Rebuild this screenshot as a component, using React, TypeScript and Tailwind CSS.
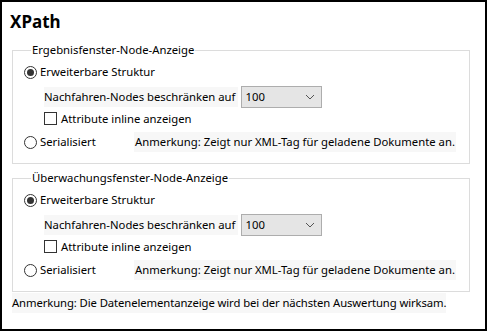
import React from "react";

function Radio({ checked }: { checked?: boolean }) {
  return (
    <span className="w-[13px] h-[13px] rounded-full border border-[#333] flex items-center justify-center shrink-0 bg-white">
      {checked && <span className="w-[7px] h-[7px] rounded-full bg-[#333]" />}
    </span>
  );
}

function Checkbox() {
  return <span className="w-[13px] h-[13px] border border-[#333] bg-white shrink-0" />;
}

function NodeGroup({ title }: { title: string }) {
  return (
    <fieldset className="border border-[#dcdcdc] pl-[11px] pr-2 pb-[7px]">
      <legend className="ml-[7px] px-[1px] leading-[16px]">{title}</legend>
      <div className="flex items-center gap-[3px] h-[24px] mt-[2px]">
        <Radio checked />
        <span>Erweiterbare Struktur</span>
      </div>
      <div className="flex items-center h-[24px] mt-[1px] pl-[20px]">
        <span className="bg-[#f7f7f7] pr-[3px] leading-[20px]">Nachfahren-Nodes beschränken auf</span>
        <div className="ml-[3px] w-[81px] h-[22px] bg-[#e5e5e5] border border-[#adadad] flex items-center justify-between pl-[3px] pr-[6px]">
          <span>100</span>
          <svg width="10" height="6" viewBox="0 0 10 6" fill="none" stroke="#555" strokeWidth="1">
            <path d="M1 1 L5 5 L9 1" />
          </svg>
        </div>
      </div>
      <div className="flex items-center gap-[4px] h-[19px] pl-[20px]">
        <Checkbox />
        <span>Attribute inline anzeigen</span>
      </div>
      <div className="flex items-center h-[28px]">
        <Radio />
        <span className="ml-[3px] w-[94px]">Serialisiert</span>
        <span className="bg-[#f7f7f7] px-[1px] leading-[20px]">Anmerkung: Zeigt nur XML-Tag für geladene Dokumente an.</span>
      </div>
    </fieldset>
  );
}

export default function App() {
  return (
    <div className="w-[489px] h-[332px] bg-white text-[11.3px] leading-[16px] text-black whitespace-nowrap" style={{ fontFamily: '"Noto Sans", sans-serif' }}>
      <div className="w-[487px] h-[331px] border-2 border-black pl-[10px] pr-[15px]">
        <h1 className="text-[17px] font-bold leading-[22px] pt-[9px] -ml-[2px]">XPath</h1>
        <div className="mt-[9px] flex flex-col gap-[6px]">
          <NodeGroup title="Ergebnisfenster-Node-Anzeige" />
          <NodeGroup title="Überwachungsfenster-Node-Anzeige" />
        </div>
        <p className="mt-[1px] inline-block bg-[#f7f7f7] leading-[20px] tracking-[-0.1px]">
          Anmerkung: Die Datenelementanzeige wird bei der nächsten Auswertung wirksam.
        </p>
      </div>
    </div>
  );
}
